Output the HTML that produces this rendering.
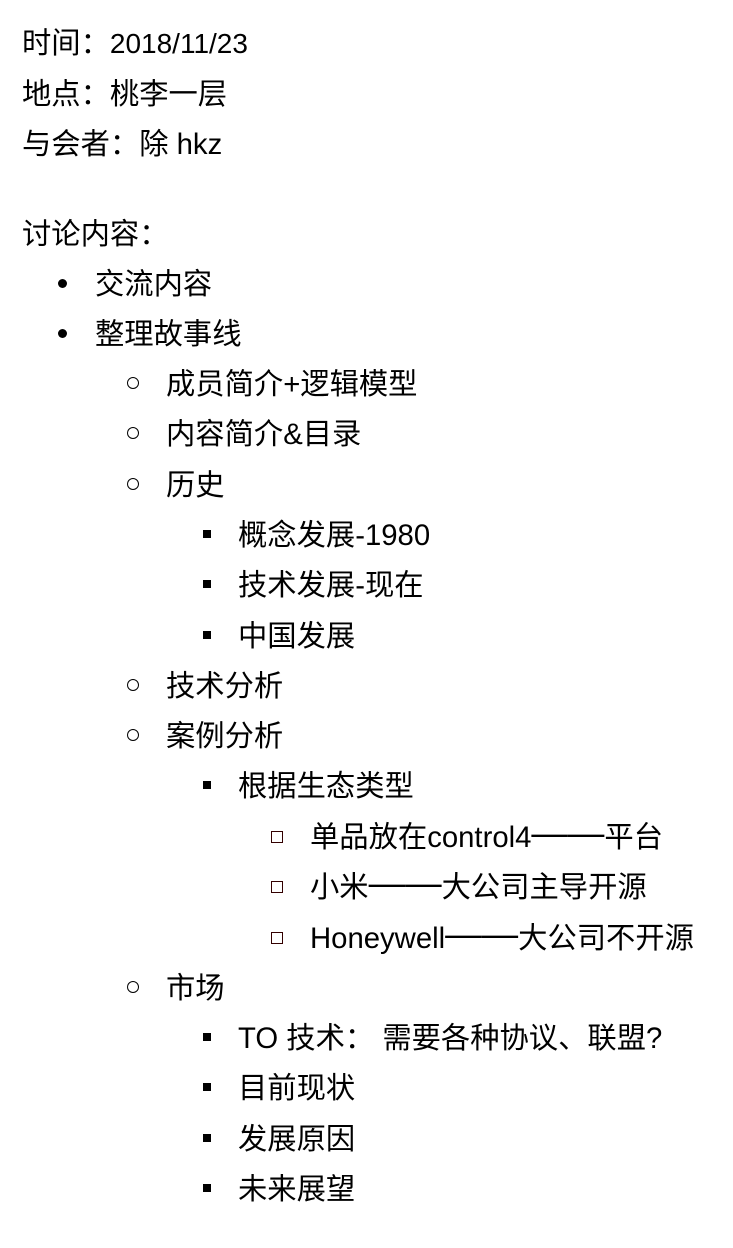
<!DOCTYPE html>
<html><head><meta charset="utf-8"><style>
body{margin:0;width:733px;height:1248px;background:#fff;position:relative;overflow:hidden;font-family:"Liberation Sans","Noto Sans CJK SC",sans-serif;color:#000}
.l{position:absolute;font-size:29.3px;line-height:40px;height:40px;white-space:nowrap;margin-top:2px}
.b{position:absolute;box-sizing:border-box}
.d{width:9px;height:9px;border-radius:50%;background:#000}
.c{width:12px;height:12px;border-radius:50%;border:1.5px solid #000}
.s{width:8px;height:8px;background:#000}
.h{width:12px;height:12px;border:1.5px solid #300}
.m{font-size:36.5px;line-height:0;position:relative;top:-2px}
</style></head><body>
<div class="l" style="left:22px;top:22px">时间：<span style="font-size:28px">2018/11/23</span></div>
<div class="l" style="left:22px;top:73px">地点：桃李一层</div>
<div class="l" style="left:22px;top:123px">与会者：除 hkz</div>
<div class="l" style="left:22px;top:213px">讨论内容：</div>

<div class="b d" style="left:58px;top:279px"></div><div class="l" style="left:95px;top:263px">交流内容</div>
<div class="b d" style="left:58px;top:329px"></div><div class="l" style="left:95px;top:313px">整理故事线</div>
<div class="b c" style="left:127px;top:377px"></div><div class="l" style="left:166px;top:363px">成员简介+逻辑模型</div>
<div class="b c" style="left:127px;top:427px"></div><div class="l" style="left:166px;top:413px">内容简介&amp;目录</div>
<div class="b c" style="left:127px;top:478px"></div><div class="l" style="left:166px;top:464px">历史</div>
<div class="b s" style="left:203px;top:530px"></div><div class="l" style="left:238px;top:514px">概念发展-1980</div>
<div class="b s" style="left:203px;top:580px"></div><div class="l" style="left:238px;top:564px">技术发展-现在</div>
<div class="b s" style="left:203px;top:631px"></div><div class="l" style="left:238px;top:615px">中国发展</div>
<div class="b c" style="left:127px;top:679px"></div><div class="l" style="left:166px;top:665px">技术分析</div>
<div class="b c" style="left:127px;top:729px"></div><div class="l" style="left:166px;top:715px">案例分析</div>
<div class="b s" style="left:203px;top:781px"></div><div class="l" style="left:238px;top:765px">根据生态类型</div>
<div class="b h" style="left:271px;top:831px"></div><div class="l" style="left:310px;top:816px">单品放在control4<span class="m">——</span>平台</div>
<div class="b h" style="left:271px;top:881px"></div><div class="l" style="left:310px;top:866px">小米<span class="m">——</span>大公司主导开源</div>
<div class="b h" style="left:271px;top:932px"></div><div class="l" style="left:310px;top:917px">Honeywell<span class="m">——</span>大公司不开源</div>
<div class="b c" style="left:127px;top:981px"></div><div class="l" style="left:166px;top:967px">市场</div>
<div class="b s" style="left:203px;top:1033px"></div><div class="l" style="left:238px;top:1017px">TO 技术： 需要各种协议、联盟?</div>
<div class="b s" style="left:203px;top:1083px"></div><div class="l" style="left:238px;top:1067px">目前现状</div>
<div class="b s" style="left:203px;top:1134px"></div><div class="l" style="left:238px;top:1118px">发展原因</div>
<div class="b s" style="left:203px;top:1184px"></div><div class="l" style="left:238px;top:1168px">未来展望</div>
</body></html>
